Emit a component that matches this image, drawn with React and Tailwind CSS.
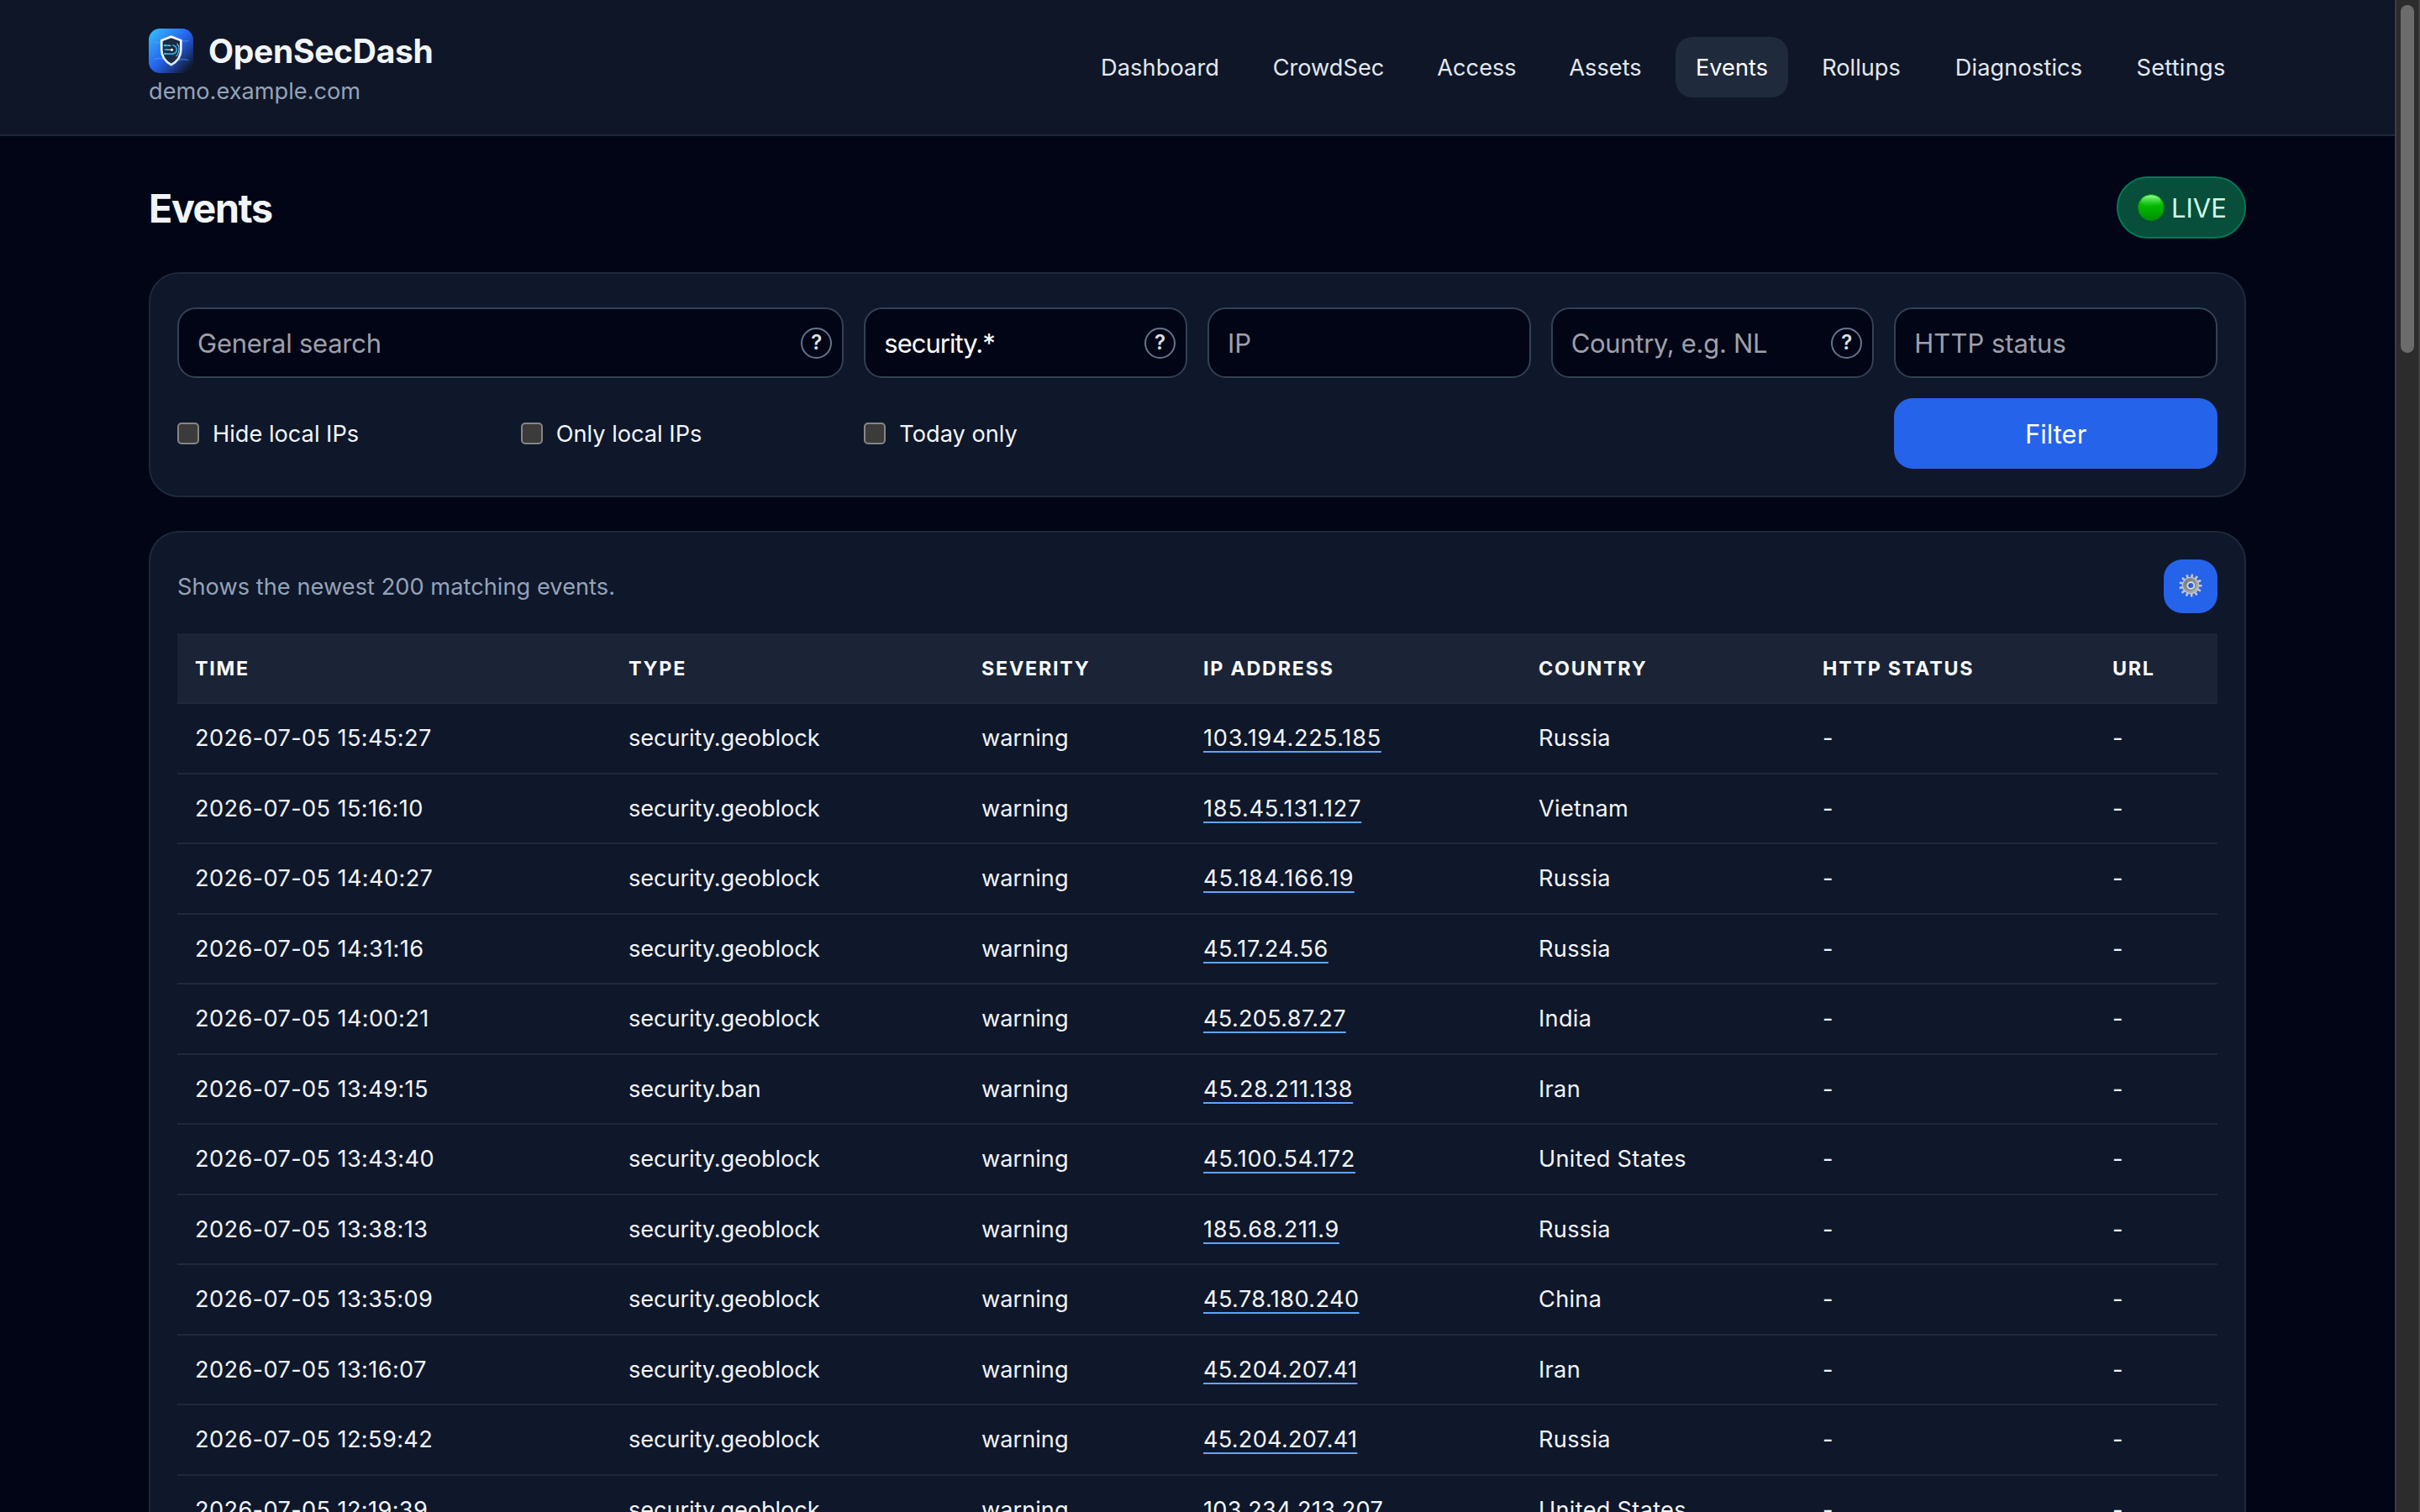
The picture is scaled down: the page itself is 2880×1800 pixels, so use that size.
import React from 'react';

const NAV = [
  { label: 'Dashboard', cls: 'w-[189px] tracking-[0.1px] pl-[2px]' },
  { label: 'CrowdSec', cls: 'w-[181px] pl-px' },
  { label: 'Access', cls: 'w-[140px] pl-px' },
  { label: 'Assets', cls: 'w-[135px]' },
  { label: 'Events', cls: 'w-[134px]', active: true },
  { label: 'Rollups', cls: 'w-[142px]' },
  { label: 'Diagnostics', cls: 'w-[200px] tracking-[0.1px] pl-px' },
  { label: 'Settings', cls: 'w-[155px] tracking-[0.25px]' },
];

const COLUMNS = ['Time', 'Type', 'Severity', 'IP address', 'Country', 'HTTP status', 'URL'];

const ROWS = [
  ['2026-07-05 15:45:27', 'security.geoblock', '103.194.225.185', 'Russia', 'tracking-[0.72px]'],
  ['2026-07-05 15:16:10', 'security.geoblock', '185.45.131.127', 'Vietnam', 'tracking-[0.75px]'],
  ['2026-07-05 14:40:27', 'security.geoblock', '45.184.166.19', 'Russia', 'tracking-[1.05px]'],
  ['2026-07-05 14:31:16', 'security.geoblock', '45.17.24.56', 'Russia', 'tracking-[0.5px]'],
  ['2026-07-05 14:00:21', 'security.geoblock', '45.205.87.27', 'India', 'tracking-[0.27px]'],
  ['2026-07-05 13:49:15', 'security.ban', '45.28.211.138', 'Iran', 'tracking-[0.58px]'],
  ['2026-07-05 13:43:40', 'security.geoblock', '45.100.54.172', 'United States', 'tracking-[0.65px]'],
  ['2026-07-05 13:38:13', 'security.geoblock', '185.68.211.9', 'Russia', 'tracking-[0.58px]'],
  ['2026-07-05 13:35:09', 'security.geoblock', '45.78.180.240', 'China', 'tracking-[0.38px]'],
  ['2026-07-05 13:16:07', 'security.geoblock', '45.204.207.41', 'Iran', 'tracking-[0.22px]'],
  ['2026-07-05 12:59:42', 'security.geoblock', '45.204.207.41', 'Russia', 'tracking-[0.22px]'],
  ['2026-07-05 12:19:39', 'security.geoblock', '103.234.213.207', 'United States', 'tracking-[0.25px]'],
];

const GRID = 'grid grid-cols-[516px_420px_264px_399px_338px_345px_1fr] items-center pl-[21px]';

function Logo() {
  return (
    <svg viewBox="0 0 52 52" className="size-[53px] shrink-0">
      <defs>
        <linearGradient id="tile" x1="0" y1="0" x2="1" y2="1">
          <stop offset="0" stopColor="#38c6fc" />
          <stop offset="0.22" stopColor="#2f97f7" />
          <stop offset="0.5" stopColor="#2563eb" />
          <stop offset="0.66" stopColor="#1d47a8" />
          <stop offset="0.9" stopColor="#101a30" />
        </linearGradient>
        <linearGradient id="edge" x1="0" y1="0" x2="0" y2="1">
          <stop offset="0" stopColor="#ffffff" />
          <stop offset="1" stopColor="#dbe7fb" />
        </linearGradient>
      </defs>
      <rect width="52" height="52" rx="13" fill="url(#tile)" />
      <g fill="none" stroke="#5aa9f8" strokeWidth="1.2" strokeLinecap="round" opacity="0.55">
        <path d="M7 15.5c5 2.5 9 1 14-1.500s10-3 14-1 7 2.500 11 1" />
        <path d="M7 36c5-2.500 9-1 14 1s10 1.500 14 0 7-1.500 11 0" />
      </g>
      <path
        d="M26.300 9.500 37.600 13.800V25c0 8-4.500 13.500-11.300 17.300C19.500 38.500 15 33 15 25V13.800Z"
        fill="#1c2a42"
        stroke="url(#edge)"
        strokeWidth="2.600"
      />
      <g fill="none" stroke="#27b4ea" strokeWidth="1.700" strokeLinecap="round">
        <path d="M19 19.800h4" />
        <path d="M28.500 19.600c5.500 1.400 5.500 9.200-.5 10H19" />
        <path d="M19 24.600h3" />
      </g>
      <path d="M33 17.500c3.500 4 3 11-1 15" fill="none" stroke="#8ecbf5" strokeWidth="1" />
      <path d="M23 19.800h3M22 24.700h6" stroke="#dbeafe" strokeWidth="1" />
      <circle cx="27" cy="24.700" r="1.500" fill="#ffffff" />
      <circle cx="19" cy="19.700" r="1.400" fill="#22d3ee" />
      <circle cx="19" cy="29.500" r="1.200" fill="#38bdf8" />
    </svg>
  );
}

function Gear() {
  const teeth = Array.from({ length: 13 }, (_, i) => (i * 360) / 13 + 8);
  return (
    <svg viewBox="0 0 28 28" className="size-[28px] -translate-y-px">
      <defs>
        <linearGradient id="metal" x1="0" y1="0" x2="1" y2="1">
          <stop offset="0" stopColor="#6f7478" />
          <stop offset="1" stopColor="#b5b9bc" />
        </linearGradient>
      </defs>
      {teeth.map((a) => (
        <rect key={a} x="12.700" y="0.300" width="2.600" height="5" rx="0.900" fill="#c3c8d0" transform={`rotate(${a} 14 14)`} />
      ))}
      <circle cx="14" cy="14" r="10.300" fill="#bfc3c6" />
      <circle cx="14" cy="14" r="8.900" fill="url(#metal)" />
      <circle cx="14.300" cy="14" r="5.800" fill="#66696d" />
      <circle cx="14.300" cy="14" r="4" fill="#2563eb" stroke="#d9dcdf" strokeWidth="2.200" />
      <path d="M13.200 12.200a2.200 2.200 0 0 0 0 3.600" fill="none" stroke="#3f4247" strokeWidth="1.200" />
    </svg>
  );
}

function LiveDot() {
  return (
    <svg viewBox="0 0 32 32" className="size-[32px]">
      <defs>
        <linearGradient id="dot" x1="0" y1="0" x2="0" y2="1">
          <stop offset="0" stopColor="#3fe03f" />
          <stop offset="0.450" stopColor="#00b600" />
          <stop offset="1" stopColor="#009000" />
        </linearGradient>
        <linearGradient id="shine" x1="0" y1="0" x2="0" y2="1">
          <stop offset="0" stopColor="#8dff8d" />
          <stop offset="1" stopColor="#1cc41c" stopOpacity="0" />
        </linearGradient>
      </defs>
      <circle cx="16" cy="16" r="15.500" fill="url(#dot)" stroke="#0a8a12" strokeWidth="1" />
      <ellipse cx="16" cy="8.500" rx="11.500" ry="7" fill="url(#shine)" />
    </svg>
  );
}

function Field({ text, tracking = '', filled, help, className = '' }) {
  return (
    <div className={`flex h-[84px] items-center justify-between rounded-[22px] border-2 border-[#334155] bg-[#020515] pl-[22px] pr-[12px] text-[31px] ${className}`}>
      <span className={`whitespace-nowrap pt-[2px] ${tracking} ${filled ? 'text-white' : 'text-[#9da0ab]'}`}>{text}</span>
      {help && (
        <span className="flex size-[37px] items-center justify-center rounded-full border-2 border-[#64748b] text-[24px] font-semibold leading-none text-[#dbe2ea]">
          ?
        </span>
      )}
    </div>
  );
}

function Check({ label }) {
  return (
    <label className="flex items-center gap-[16px]">
      <span className="size-[26px] rounded-[5px] border-2 border-[#858585] bg-[#3b3b3b]" />
      <span className="pt-[2px]">{label}</span>
    </label>
  );
}

export default function App() {
  return (
    <div className="flex h-[1800px] w-[2880px] overflow-hidden bg-[#020515] font-['Inter',sans-serif] text-[27.2px] leading-[40px] text-[#f1f5f9]">
      <div className="min-w-0 flex-1 overflow-hidden">
        <header className="flex h-[162px] items-start justify-between border-b-2 border-[#1e293b] bg-[#0f1627] pl-[177px] pr-[177px]">
          <div className="pt-[34px]">
            <div className="flex h-[52px] items-center gap-[18px]">
              <Logo />
              <span className="pt-[2px] text-[39px] font-bold tracking-[-0.3px]">OpenSecDash</span>
            </div>
            <div className="mt-[3px] text-[#94a3b8]">demo.example.com</div>
          </div>
          <nav className="mt-[44px] flex gap-4">
            {NAV.map((n) => (
              <a
                key={n.label}
                className={`flex h-[72px] items-center justify-center rounded-[20px] pt-[2px] ${n.cls} ${
                  n.active ? 'bg-[#1f2a3c] text-white' : 'text-[#e2e8f0]'
                }`}
              >
                {n.label}
              </a>
            ))}
          </nav>
        </header>

        <main className="px-[177px] pt-[48px]">
          <div className="flex h-[74px] items-center justify-between">
            <h1 className="pt-[2px] text-[46.6px] font-bold tracking-[-1.4px]">Events</h1>
            <div className="flex h-[74px] w-[154px] items-center gap-[8px] rounded-full border-2 border-[#047857] bg-[#074e3b] pl-[23px] text-[31px] text-[#d1fae5]">
              <LiveDot />
              <span className="pt-[2px]">LIVE</span>
            </div>
          </div>

          <section className="mt-[40px] h-[268px] rounded-[36px] border-2 border-[#1e293b] bg-[#0f172a] px-[32px] pt-[40px]">
            <div className="grid grid-cols-6 gap-6">
              <Field className="col-span-2" text="General search" tracking="tracking-[-0.25px]" help />
              <Field text="security.*" tracking="tracking-[-1px]" filled help />
              <Field text="IP" />
              <Field text="Country, e.g. NL" tracking="tracking-[-0.3px]" help />
              <Field text="HTTP status" />
              <Check label="Hide local IPs" />
              <Check label="Only local IPs" />
              <Check label="Today only" />
              <button className="col-start-6 flex h-[84px] items-center justify-center rounded-[22px] bg-[#2563eb] pt-[2px] text-[31px] text-white">
                Filter
              </button>
            </div>
          </section>

          <section className="mt-[40px] h-[1300px] rounded-[36px] border-2 border-[#1e293b] bg-[#0f172a] p-[32px]">
            <div className="flex h-[64px] items-center justify-between">
              <p className="pt-[2px] tracking-[0.04px] text-[#94a3b8]">Shows the newest 200 matching events.</p>
              <button className="flex size-[64px] items-center justify-center rounded-[22px] bg-[#2563eb]">
                <Gear />
              </button>
            </div>
            <div className="mt-[24px]">
              <div className={`${GRID} h-[84px] border-b-2 border-[#1e293b] bg-[#1a2436] pt-[2px] text-[23.3px] font-bold uppercase tracking-[1.75px] text-[#f8fafc]`}>
                {COLUMNS.map((c) => (
                  <span key={c}>{c}</span>
                ))}
              </div>
              {ROWS.map(([time, type, ip, country, ipTracking]) => (
                <div key={time} className={`${GRID} h-[83.5px] border-b-2 border-[#1e293b] pt-px`}>
                  <span className="tracking-[0.36px]">{time}</span>
                  <span className="tracking-[-0.1px]">{type}</span>
                  <span>warning</span>
                  <span>
                    <a className={`underline decoration-[#60a5fa] decoration-2 underline-offset-[6px] ${ipTracking}`}>{ip}</a>
                  </span>
                  <span className="tracking-[0.28px]">{country}</span>
                  <span>-</span>
                  <span>-</span>
                </div>
              ))}
            </div>
          </section>
        </main>
      </div>

      <aside className="flex h-full w-[30px] shrink-0 justify-center border-x-2 border-[#3e3e3e] bg-[#2c2c2c] pt-[6px]">
        <div className="h-[414px] w-[16px] rounded-full bg-[#6b6b6b]" />
      </aside>
    </div>
  );
}
